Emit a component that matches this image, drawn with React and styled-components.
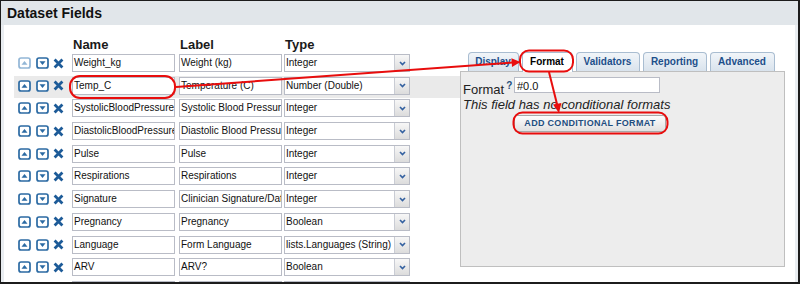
import React from 'react';
import styled, { createGlobalStyle } from 'styled-components';

const GlobalStyle = createGlobalStyle`
  html, body { margin: 0; padding: 0; background: #fff; }
  body { font-family: "Liberation Sans", Arial, sans-serif; }
`;

const Frame = styled.div`
  position: relative;
  width: 800px;
  height: 284px;
  box-sizing: border-box;
  border: 1px solid #1c1c1c;
  border-right-width: 2px;
  border-bottom-width: 2px;
  display: flex;
  flex-direction: column;
  overflow: hidden;
  background: #fff;
`;

const Header = styled.div`
  flex: none;
  height: 24px;
  background: #e1e6ea;
  padding-left: 6px;
  font: bold 14px/24px "Liberation Sans", Arial, sans-serif;
  color: #111;
`;

const Body = styled.div`
  flex: 1;
  min-height: 0;
  display: flex;
  border-left: 3px solid #e9edf1;
  border-right: 3px solid #e9edf1;
  padding: 0 10px;
  background: #fff;
`;

const FieldsColumn = styled.div`
  width: 446px;
  flex: none;
  padding-top: 12px;
`;

const gridCols = `
  display: grid;
  grid-template-columns: 18px 17px 19px 107px 105px 126px;
  padding-left: 4px;
`;

const HeadRow = styled.div`
  ${gridCols}
  height: 16px;
  font: bold 13px/16px "Liberation Sans", Arial, sans-serif;
  color: #1a1a1a;
`;

const HeadCell = styled.div`
  grid-column: ${(p) => p.$col};
  padding-left: 1px;
`;

const Row = styled.div`
  ${gridCols}
  height: 22.7px;
  box-sizing: border-box;
  padding-top: 1px;
  align-items: start;
  background: ${(p) => (p.$selected ? '#eaeaea' : 'transparent')};
`;

const IconCell = styled.div`
  height: 18px;
  display: flex;
  align-items: center;
`;

const Field = styled.div`
  width: ${(p) => p.$w}px;
  height: 18px;
  box-sizing: border-box;
  border: 1px solid #b9bcc6;
  background: #fff;
  padding: 0 1px;
  font: 10px/16px "Liberation Sans", Arial, sans-serif;
  color: #111;
  white-space: nowrap;
  overflow: hidden;
`;

const Select = styled.div`
  width: 126px;
  height: 18px;
  box-sizing: border-box;
  border: 1px solid #b9bcc6;
  background: #fff;
  display: flex;
`;

const SelectValue = styled.div`
  flex: 1;
  padding-left: 1px;
  font: 10px/16px "Liberation Sans", Arial, sans-serif;
  color: #111;
  white-space: nowrap;
  overflow: hidden;
`;

const Trigger = styled.div`
  width: 14px;
  flex: none;
  border-left: 1px solid #c9ccd4;
  background: linear-gradient(#f7f7f7, #dcdcdc);
  display: flex;
  align-items: center;
  justify-content: center;
`;

const PanelColumn = styled.div`
  width: 325px;
  flex: none;
  padding-top: 27px;
`;

const Tabs = styled.div`
  display: flex;
  gap: 3px;
  padding-left: 7.5px;
  height: 19px;
`;

const Tab = styled.div`
  width: ${(p) => p.$w}px;
  height: ${(p) => (p.$active ? 20 : 19)}px;
  box-sizing: border-box;
  border: 1px solid #a9bdd1;
  border-bottom: none;
  border-radius: 4px 4px 0 0;
  background: ${(p) => (p.$active ? '#fff' : 'linear-gradient(#f1f5f9, #d9e3ed)')};
  color: ${(p) => (p.$active ? '#000' : '#1d4f8a')};
  font: bold 10px/18px "Liberation Sans", Arial, sans-serif;
  text-align: center;
  white-space: nowrap;
  overflow: hidden;
  position: relative;
  z-index: ${(p) => (p.$active ? 1 : 0)};
`;

const Panel = styled.div`
  height: 196px;
  box-sizing: border-box;
  border: 1px solid #bfbfbf;
  background: #ededed;
  padding: 5px 2px;
`;

const FormatRow = styled.div`
  display: flex;
  align-items: flex-end;
  height: 16px;
`;

const FormatLabel = styled.div`
  width: 51px;
  flex: none;
  font: 13px/11px "Liberation Sans", Arial, sans-serif;
  color: #222;
  margin-bottom: -2px;
  white-space: nowrap;
`;

const Help = styled.sup`
  font: bold 10px "Liberation Sans", Arial, sans-serif;
  color: #234d7c;
  margin-left: 2px;
  vertical-align: 5px;
  line-height: 0;
`;

const FormatInput = styled.div`
  width: 146px;
  height: 16px;
  box-sizing: border-box;
  border: 1px solid #b9bcc6;
  background: #fff;
  padding: 1px 2px 0;
  font: 11px/14px "Liberation Sans", Arial, sans-serif;
  color: #111;
`;

const Note = styled.div`
  margin-top: 4px;
  font: italic 13px/15px "Liberation Sans", Arial, sans-serif;
  color: #222;
`;

const ActionButton = styled.div`
  margin: 3px 0 0 51px;
  width: 152px;
  height: 17px;
  box-sizing: border-box;
  border: 1px solid #a8a8a8;
  border-radius: 3px;
  background: linear-gradient(#fdfdfd, #e1e1e1);
  font: bold 9px/15px "Liberation Sans", Arial, sans-serif;
  letter-spacing: 0.3px;
  color: #1f4e80;
  text-align: center;
  white-space: nowrap;
`;

const Overlay = styled.svg`
  position: absolute;
  top: -1px;
  left: -1px;
  width: 800px;
  height: 284px;
  pointer-events: none;
  z-index: 5;
`;

const MoveIcon = ({ dir, disabled }) => {
  const c = disabled ? '#92b6d6' : '#2b6aa3';
  return (
    <svg width="13" height="12" viewBox="0 0 13 12">
      <rect x="1" y="1" width="11" height="10" rx="2" fill="#fff" stroke={c} strokeWidth="1.7" />
      <path d={dir === 'up' ? 'M3.5 7.8 L9.5 7.8 L6.5 4 Z' : 'M3.5 4.2 L9.5 4.2 L6.5 8 Z'} fill={c} />
    </svg>
  );
};

const DeleteIcon = () => (
  <svg width="11" height="11" viewBox="0 0 11 11">
    <path d="M1.6 1.6 L9.4 9.4 M9.4 1.6 L1.6 9.4" stroke="#1d5b98" strokeWidth="2.8" />
  </svg>
);

const Chevron = () => (
  <svg width="7" height="5" viewBox="0 0 7 5">
    <path d="M1 1 L3.5 3.6 L6 1" stroke="#3461a0" strokeWidth="1.6" fill="none" />
  </svg>
);

const rows = [
  ['Weight_kg', 'Weight (kg)', 'Integer'],
  ['Temp_C', 'Temperature (C)', 'Number (Double)'],
  ['SystolicBloodPressure', 'Systolic Blood Pressure', 'Integer'],
  ['DiastolicBloodPressure', 'Diastolic Blood Pressure', 'Integer'],
  ['Pulse', 'Pulse', 'Integer'],
  ['Respirations', 'Respirations', 'Integer'],
  ['Signature', 'Clinician Signature/Date', 'Integer'],
  ['Pregnancy', 'Pregnancy', 'Boolean'],
  ['Language', 'Form Language', 'lists.Languages (String)'],
  ['ARV', 'ARV?', 'Boolean'],
  ['', '', ''],
];

const tabs = [
  ['Display', 51],
  ['Format', 51],
  ['Validators', 64],
  ['Reporting', 64],
  ['Advanced', 65],
];

export default function App() {
  return (
    <>
      <GlobalStyle />
      <Frame>
        <Header>Dataset Fields</Header>
        <Body>
          <FieldsColumn>
            <HeadRow>
              <HeadCell $col={4}>Name</HeadCell>
              <HeadCell $col={5}>Label</HeadCell>
              <HeadCell $col={6}>Type</HeadCell>
            </HeadRow>
            {rows.map(([name, label, type], i) => (
              <Row key={i} $selected={i === 1}>
                <IconCell><MoveIcon dir="up" disabled={i === 0} /></IconCell>
                <IconCell><MoveIcon dir="down" /></IconCell>
                <IconCell><DeleteIcon /></IconCell>
                <Field $w={103}>{name}</Field>
                <Field $w={103}>{label}</Field>
                <Select>
                  <SelectValue>{type}</SelectValue>
                  <Trigger><Chevron /></Trigger>
                </Select>
              </Row>
            ))}
          </FieldsColumn>
          <PanelColumn>
            <Tabs>
              {tabs.map(([t, w]) => (
                <Tab key={t} $w={w} $active={t === 'Format'}>{t}</Tab>
              ))}
            </Tabs>
            <Panel>
              <FormatRow>
                <FormatLabel>Format<Help>?</Help></FormatLabel>
                <FormatInput>#0.0</FormatInput>
              </FormatRow>
              <Note>This field has no conditional formats</Note>
              <ActionButton>ADD CONDITIONAL FORMAT</ActionButton>
            </Panel>
          </PanelColumn>
        </Body>
        <Overlay viewBox="0 0 800 284">
          <g fill="none" stroke="#e80d0d" strokeWidth="2">
            <rect x="70" y="76" width="105" height="22" rx="10" />
            <rect x="520" y="50.5" width="53" height="21" rx="9" />
            <rect x="513.5" y="112.5" width="154" height="21" rx="9" />
            <line x1="176" y1="87" x2="512" y2="62.6" />
            <line x1="549" y1="72" x2="557.2" y2="105" />
          </g>
          <g fill="#e80d0d">
            <path d="M520.5 62 L511.4 58.2 L512 67 Z" />
            <path d="M559 113 L553 104.4 L561.4 103 Z" />
          </g>
        </Overlay>
      </Frame>
    </>
  );
}
